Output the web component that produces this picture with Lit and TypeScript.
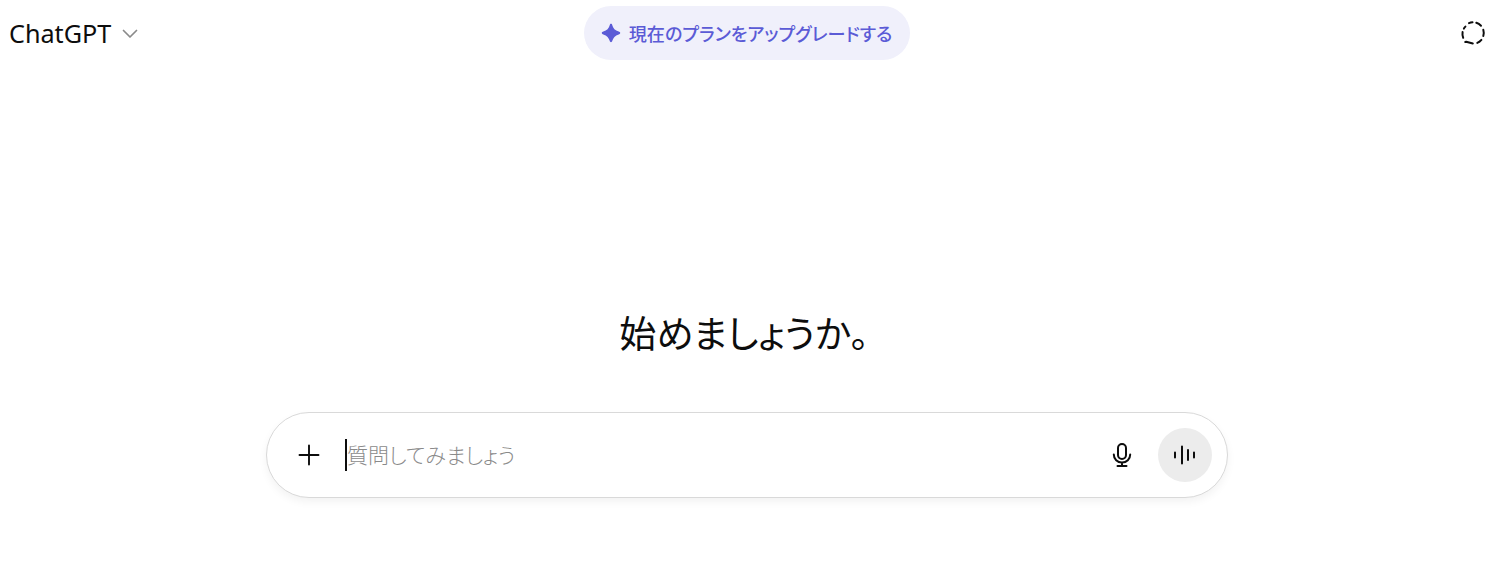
import { LitElement, html, css } from 'lit';
import { customElement } from 'lit/decorators.js';

@customElement('app-root')
export class AppRoot extends LitElement {
   static styles = css`
      :host {
         display: block;
         height: 586px;
         box-sizing: border-box;
         padding-right: 17px;
         background: #fff;
         color: #0d0d0d;
         font-family: 'Noto Sans', 'Noto Sans CJK JP', sans-serif;
         overflow: hidden;
      }
      .header {
         display: grid;
         grid-template-columns: 1fr auto 1fr;
         align-items: center;
         padding: 6px 9px 0 9px;
      }
      .model {
         display: flex;
         align-items: center;
         gap: 10px;
         font-size: 25.2px;
         line-height: 54px;
         color: #0d0d0d;
      }
      .model svg {
         margin-top: 1px;
      }
      .upgrade {
         display: flex;
         align-items: center;
         gap: 8px;
         height: 54px;
         box-sizing: border-box;
         padding: 0 18px 0 17px;
         border-radius: 27px;
         background: #f0f0fb;
         color: #5b5bd6;
         font-family: 'Noto Sans CJK JP', sans-serif;
         font-size: 18.1px;
         font-weight: 500;
         font-feature-settings: 'palt';
         white-space: nowrap;
      }
      .temp {
         justify-self: end;
         display: flex;
         margin-right: -1px;
      }
      .main {
         display: flex;
         flex-direction: column;
         align-items: center;
         padding-top: 248px;
      }
      h1 {
         margin: 0;
         padding-right: 6px;
         font-family: 'Noto Sans CJK JP', sans-serif;
         font-size: 37px;
         font-weight: 400;
         line-height: 48px;
         font-feature-settings: 'palt';
         color: #0d0d0d;
      }
      .composer {
         margin-top: 56px;
         width: 962px;
         height: 86px;
         box-sizing: border-box;
         display: flex;
         align-items: center;
         padding: 0 15px 0 24px;
         border: 1px solid #d9d9d9;
         border-radius: 43px;
         background: #fff;
         box-shadow: 0 4px 8px rgba(0, 0, 0, 0.05);
      }
      .plus {
         display: flex;
         width: 36px;
         justify-content: center;
      }
      .caret {
         width: 2px;
         height: 32px;
         margin-left: 18px;
         background: #0d0d0d;
      }
      .placeholder {
         flex: 1;
         padding-bottom: 3px;
         font-family: 'Noto Sans CJK JP', sans-serif;
         font-size: 21px;
         font-weight: 300;
         font-feature-settings: 'palt';
         color: #8a8a8a;
      }
      .mic {
         display: flex;
         margin-right: 23px;
      }
      .voice {
         width: 54px;
         height: 54px;
         border-radius: 50%;
         background: #ececec;
         display: flex;
         align-items: center;
         justify-content: center;
      }
   `;

   render() {
      return html`
         <div class="header">
            <div class="model">
               <span>ChatGPT</span>
               <svg width="18" height="18" viewBox="0 0 18 18" fill="none" stroke="#8a8a8a" stroke-width="1.7" stroke-linecap="round" stroke-linejoin="round">
                  <path d="M2.500 5.500 9 12l6.500-6.500" />
               </svg>
            </div>
            <div class="upgrade">
               <svg width="20" height="20" viewBox="0 0 20 20" fill="currentColor">
                  <path d="M10 .8c.7 0 1 .5 1.200 1.100.9 3.400 2.900 5.500 6.500 6.700.6.200 1.500.6 1.500 1.400s-.9 1.200-1.500 1.400c-3.600 1.200-5.600 3.300-6.500 6.700-.2.600-.5 1.100-1.200 1.100s-1-.5-1.200-1.100c-.9-3.400-2.900-5.500-6.500-6.700C1.700 11.200.8 10.800.8 10s.9-1.200 1.500-1.400c3.600-1.200 5.600-3.300 6.500-6.700C9 1.300 9.300.8 10 .8z" />
               </svg>
               <span>現在のプランをアップグレードする</span>
            </div>
            <div class="temp">
               <svg width="26" height="26" viewBox="0 0 26 26" fill="none" stroke="#0d0d0d" stroke-width="2" stroke-linecap="round" stroke-linejoin="round">
                  <path d="M9 3.200A10.800 10.800 0 0 1 12.500 2.300" />
                  <path d="M16.300 2.800a10.800 10.800 0 0 1 4.700 3" />
                  <path d="M23.300 9.800a10.800 10.800 0 0 1 0 6.200" />
                  <path d="M21.400 19.900a10.800 10.800 0 0 1-4.100 3" />
                  <path d="M12.800 23.500 6.200 21.800l-1 .2" />
                  <path d="M3.200 17.800a10.800 10.800 0 0 1-.6-5.800" />
                  <path d="M3.900 8.600a10.800 10.800 0 0 1 1.500-2" />
               </svg>
            </div>
         </div>
         <div class="main">
            <h1>始めましょうか。</h1>
            <div class="composer">
               <div class="plus">
                  <svg width="24" height="24" viewBox="0 0 24 24" fill="none" stroke="#0d0d0d" stroke-width="1.9" stroke-linecap="round">
                     <path d="M12 2.500v19M2.500 12h19" />
                  </svg>
               </div>
               <span class="caret"></span>
               <span class="placeholder">質問してみましょう</span>
               <div class="mic">
                  <svg width="26" height="26" viewBox="0 0 26 26" fill="none" stroke="#0d0d0d" stroke-width="2" stroke-linecap="round" stroke-linejoin="round">
                     <rect x="9" y="2" width="8" height="15" rx="4" />
                     <path d="M4.800 12.500c0 4.600 3.600 8 8.200 8s8.200-3.400 8.200-8M13 20.500v3.500M8.500 24h9" />
                  </svg>
               </div>
               <div class="voice">
                  <svg width="24" height="24" viewBox="0 0 24 24" fill="none" stroke="#0d0d0d" stroke-width="2" stroke-linecap="round">
                     <path d="M2 9.500v5M9 3.500v17M15 7v10M21 9.500v5" />
                  </svg>
               </div>
            </div>
         </div>
      `;
   }
}
